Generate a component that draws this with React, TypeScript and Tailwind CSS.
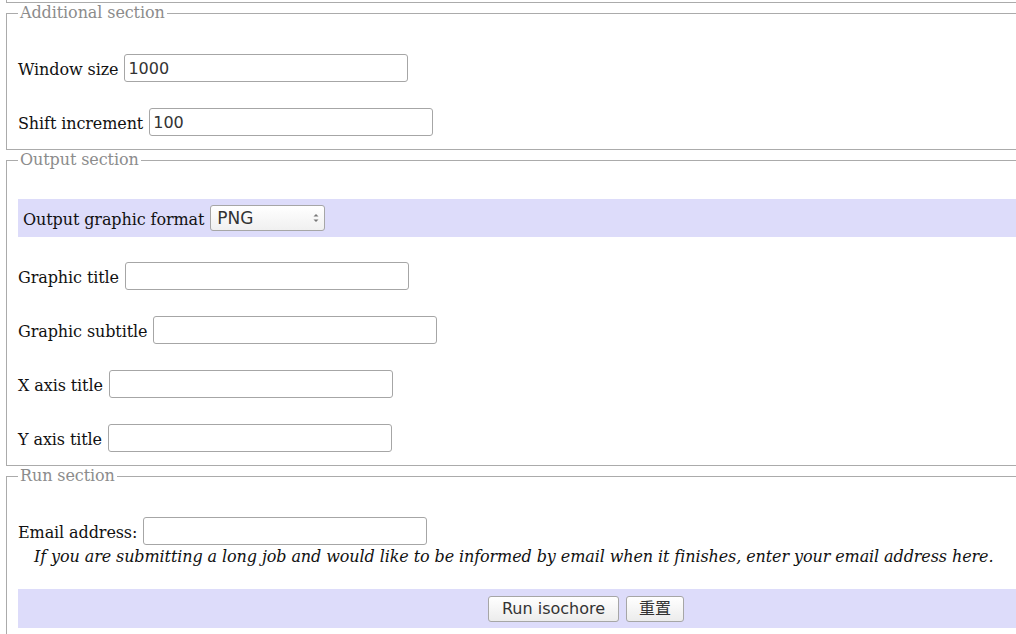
import React from "react";

const serif = "font-['DejaVu_Serif','Liberation_Serif',serif]";
const sans = "font-['DejaVu_Sans','Noto_Sans_CJK_SC',sans-serif]";

const inputCls = `h-[28px] w-[284px] rounded-[3px] border border-[#a6a6a6] bg-white px-[3px] text-[16px] text-[#333] tracking-normal ${sans} outline-none`;

function Field({ label, value }: { label: string; value?: string }) {
  return (
    <div className="flex h-[38px] items-center gap-[6px]">
      <span className="pt-[4px]">{label}</span>
      <input type="text" defaultValue={value} className={inputCls} />
    </div>
  );
}

function Legend({ children }: { children: React.ReactNode }) {
  return <legend className="px-[2px] leading-[20px] text-[#8c8c8c]">{children}</legend>;
}

export default function App() {
  return (
    <div className={`h-[634px] w-[1016px] overflow-hidden bg-white text-[16px] tracking-[-0.1px] text-[#111] ${serif}`}>
      <div className="w-[1172px]">
        <div className="mx-[6px] h-[3px] border-b border-l border-[#ababab]" />

        <fieldset className="mx-[6px] border border-[#ababab] px-[11px] pb-[8px] pt-[26px]">
          <Legend>Additional section</Legend>
          <div className="flex flex-col gap-4">
            <Field label="Window size" value="1000" />
            <Field label="Shift increment" value="100" />
          </div>
        </fieldset>

        <fieldset className="mx-[6px] border border-[#ababab] px-[11px] pb-[8px] pt-[29px]">
          <Legend>Output section</Legend>
          <div className="flex h-[38px] items-center gap-[6px] bg-[#dddcfa] pl-[5px]">
            <span className="pt-[4px]">Output graphic format</span>
            <div className="relative">
              <select
                defaultValue="PNG"
                className={`h-[26px] w-[115px] appearance-none rounded-[3px] border border-[#a6a6a6] bg-gradient-to-b from-white to-[#f0f0f0] pl-[6px] text-[17px] tracking-normal text-[#333] ${sans} outline-none`}
              >
                <option>PNG</option>
                <option>GIF</option>
                <option>JPEG</option>
                <option>PDF</option>
                <option>SVG</option>
              </select>
              <svg
                className="pointer-events-none absolute right-[6px] top-[8px]"
                width="6"
                height="10"
                viewBox="0 0 6 10"
              >
                <path d="M0.5 3.5 L3 1 L5.5 3.5 Z" fill="#777" />
                <path d="M0.5 6.5 L3 9 L5.5 6.5 Z" fill="#777" />
              </svg>
            </div>
          </div>
          <div className="mt-[20px] flex flex-col gap-4">
            <Field label="Graphic title" />
            <Field label="Graphic subtitle" />
            <Field label="X axis title" />
            <Field label="Y axis title" />
          </div>
        </fieldset>

        <fieldset className="mx-[6px] border border-[#ababab] px-[11px] pb-[8px] pt-[31px]">
          <Legend>Run section</Legend>
          <div className="flex h-[28px] items-center gap-[6px]">
            <span className="pt-[4px]">Email address:</span>
            <input type="text" className={inputCls} />
          </div>
          <p className="mt-[2px] pl-4 italic leading-[20px]">
            If you are submitting a long job and would like to be informed by email when it finishes, enter your
            email address here.
          </p>
          <div className="mt-[22px] flex h-[39px] items-center justify-center gap-[7px] bg-[#dddcfa]">
            <button
              type="button"
              className={`h-[26px] w-[131px] rounded-[3px] border border-[#a6a6a6] bg-gradient-to-b from-white to-[#ececec] text-[16px] tracking-normal text-[#333] ${sans}`}
            >
              Run isochore
            </button>
            <button
              type="reset"
              className={`h-[26px] w-[58px] rounded-[3px] border border-[#a6a6a6] bg-gradient-to-b from-white to-[#ececec] text-[16px] tracking-normal text-[#333] ${sans}`}
            >
              重置
            </button>
          </div>
        </fieldset>
      </div>
    </div>
  );
}
